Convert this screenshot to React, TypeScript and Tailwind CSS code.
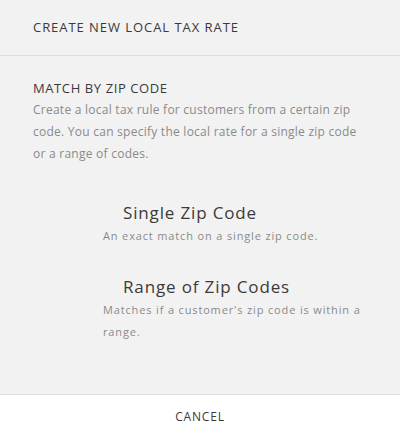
import React from "react";

export default function App() {
  const font = { fontFamily: '"Open Sans", "Liberation Sans", sans-serif' };
  return (
    <div style={font} className="w-[400px] h-[438px] bg-[#f2f2f2] flex flex-col">
      <div className="h-[56px] px-[33px] flex items-center border-b border-[#dedede] shrink-0">
        <h1 className="text-[13px] tracking-[0.95px] text-[#3a3a3a] font-medium">
          CREATE NEW LOCAL TAX RATE
        </h1>
      </div>
      <div className="flex-1 px-[33px] pt-[22px]">
        <h2 className="text-[13px] leading-[20px] tracking-[0.6px] text-[#3a3a3a] font-medium">
          MATCH BY ZIP CODE
        </h2>
        <p className="mt-[1px] text-[12px] leading-[22px] tracking-[0.25px] text-[#8a8a8a]">
          Create a local tax rule for customers from a certain zip code. You can specify the local rate for a single zip code or a range of codes.
        </p>
        <div className="pl-[70px] mt-[36px] flex flex-col gap-[28px]">
          <div>
            <div className="pl-[20px] text-[17px] leading-[24px] tracking-[0.85px] text-[#3a3a3a]">
              Single Zip Code
            </div>
            <div className="text-[11px] leading-[22px] tracking-[0.85px] text-[#8a8a8a]">
              An exact match on a single zip code.
            </div>
          </div>
          <div>
            <div className="pl-[20px] text-[17px] leading-[24px] tracking-[0.85px] text-[#3a3a3a]">
              Range of Zip Codes
            </div>
            <div className="text-[11px] leading-[22px] tracking-[0.85px] text-[#8a8a8a]">
              Matches if a customer's zip code is within a range.
            </div>
          </div>
        </div>
      </div>
      <div className="h-[44px] bg-white border-t border-[#dedede] flex items-center justify-center shrink-0">
        <span className="text-[12px] tracking-[0.8px] text-[#3a3a3a] font-medium">CANCEL</span>
      </div>
    </div>
  );
}
